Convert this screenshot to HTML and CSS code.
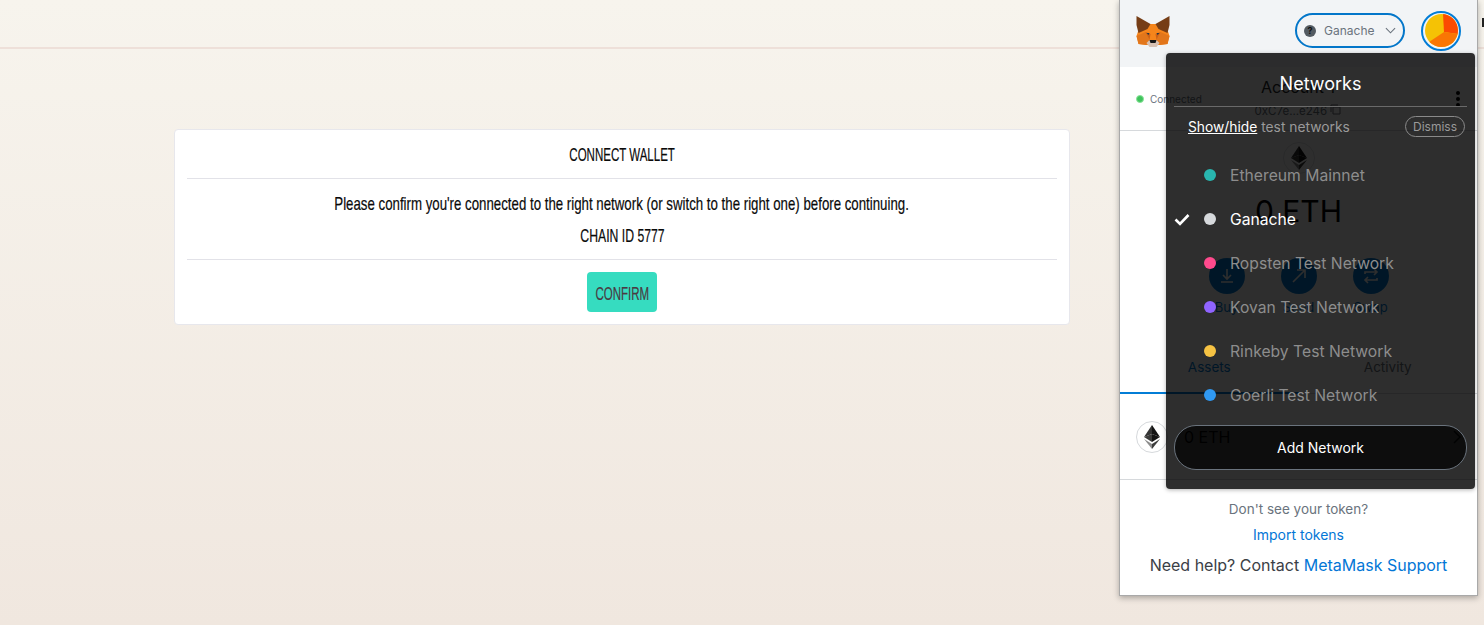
FILE: index.html
```html
<!DOCTYPE html>
<html>
<head>
  <title>Connect wallet</title>
  <link rel="stylesheet" href="styles.css">
</head>
<body>
  <header class="topbar"></header>
  <main class="content">
    <section class="card">
      <h2 class="card-title"><span class="narrow narrow-title">CONNECT WALLET</span></h2>
      <div class="card-body">
        <p><span class="narrow narrow-msg">Please confirm you're connected to the right network (or switch to the right one) before continuing.</span></p>
        <p><span class="narrow narrow-chain">CHAIN ID 5777</span></p>
      </div>
      <div class="card-footer">
        <button class="confirm"><span class="narrow narrow-title">CONFIRM</span></button>
      </div>
    </section>
  </main>

  <span class="stray"></span>

  <div class="popup">
    <div class="mm-header">
      <svg class="fox" viewBox="0 0 33 31">
        <polygon fill="#f6851b" points="2,14 11,8 22,8 31,14 33,20 31,28 23,29 10,29 2,28 0,20"/>
        <polygon fill="#e2761b" points="0,20 9,16 13,24 10,29 2,28"/>
        <polygon fill="#e2761b" points="33,20 24,16 20,24 23,29 31,28"/>
        <polygon fill="#763d16" points="0,0 14,8 11,13 2,17 0,9"/>
        <polygon fill="#763d16" points="33,0 19,8 22,13 31,17 33,9"/>
        <polygon fill="#cd6116" points="9,16 14,18 13,24"/>
        <polygon fill="#cd6116" points="24,16 19,18 20,24"/>
        <polygon fill="#233447" points="10,17 13,17 12,19"/>
        <polygon fill="#233447" points="23,17 20,17 21,19"/>
        <polygon fill="#d7c1b3" points="10,27 13,24 20,24 23,27 20,31 13,31"/>
        <polygon fill="#161616" points="13,24 20,24 19,27 14,27"/>
      </svg>
      <div class="net-pill">
        <span class="net-q">?</span>
        <span class="net-name">Ganache</span>
        <svg class="net-caret" viewBox="0 0 12 7"><path d="M1 1l5 5 5-5" fill="none" stroke="#6a737d" stroke-width="1.2"/></svg>
      </div>
      <div class="avatar-ring">
        <svg class="avatar" viewBox="0 0 33 33">
          <rect width="33" height="33" fill="#f5c205"/>
          <polygon fill="#fb4b02" points="18,0 33,0 33,20 19,18"/>
          <polygon fill="#f97604" points="19,18 33,20 33,33 5,33 4,28"/>
        </svg>
      </div>
    </div>

    <div class="acct-row">
      <div class="connected"><span class="conn-dot"></span>Connected</div>
      <div class="acct-info">
        <div class="acct-name">Account 1</div>
        <div class="acct-addr">0xC7e...e246
          <svg class="copy" viewBox="0 0 11 11"><path d="M3 3h7v7H3zM1 8V1h7" fill="none" stroke="#6a737d"/></svg>
        </div>
      </div>
      <div class="kebab"><i></i><i></i><i></i></div>
    </div>

    <div class="overview">
      <span class="eth-ring">
        <svg class="eth" viewBox="0 0 16 24">
          <polygon fill="#343434" points="8,0 0,12 8,9"/>
          <polygon fill="#141414" points="8,0 16,12 8,9"/>
          <polygon fill="#3c3c3b" points="0,12 8,17 8,9"/>
          <polygon fill="#141414" points="16,12 8,17 8,9"/>
          <polygon fill="#8c8c8c" points="0,14 8,24 8,19"/>
          <polygon fill="#3c3c3b" points="16,14 8,24 8,19"/>
        </svg>
      </span>
      <div class="balance">0 ETH</div>
      <div class="actions">
        <div class="action">
          <span class="action-btn"><svg viewBox="0 0 18 18"><path d="M9 2v9M5 8l4 4 4-4M3 15h12" fill="none" stroke="#fff" stroke-width="1.6"/></svg></span>
          Buy
        </div>
        <div class="action">
          <span class="action-btn"><svg viewBox="0 0 18 18"><path d="M3 15L15 3M7 3h8v8" fill="none" stroke="#fff" stroke-width="1.6"/></svg></span>
          Send
        </div>
        <div class="action">
          <span class="action-btn"><svg viewBox="0 0 18 18"><path d="M3 7V5h12M12 2l3 3-3 3M15 11v2H3M6 10l-3 3 3 3" fill="none" stroke="#fff" stroke-width="1.6"/></svg></span>
          Swap
        </div>
      </div>
    </div>

    <div class="tabs">
      <div class="tab tab-active">Assets</div>
      <div class="tab">Activity</div>
    </div>

    <div class="asset-row">
      <span class="asset-ring">
        <svg class="asset-eth" viewBox="0 0 16 24">
          <polygon fill="#343434" points="8,0 0,12 8,9"/>
          <polygon fill="#141414" points="8,0 16,12 8,9"/>
          <polygon fill="#3c3c3b" points="0,12 8,17 8,9"/>
          <polygon fill="#141414" points="16,12 8,17 8,9"/>
          <polygon fill="#8c8c8c" points="0,14 8,24 8,19"/>
          <polygon fill="#3c3c3b" points="16,14 8,24 8,19"/>
        </svg>
      </span>
      <span class="asset-name">0 ETH</span>
      <svg class="asset-caret" viewBox="0 0 8 14"><path d="M1 1l6 6-6 6" fill="none" stroke="#24272a" stroke-width="1.5"/></svg>
    </div>

    <div class="mm-footer">
      <div class="no-token">Don't see your token?</div>
      <a class="mm-link import">Import tokens</a>
      <div class="help">Need help? Contact <a class="mm-link">MetaMask Support</a></div>
    </div>

    <div class="net-menu">
      <div class="menu-title">Networks</div>
      <div class="menu-note">
        <span><a class="show-hide">Show/hide</a> test networks</span>
        <span class="dismiss">Dismiss</span>
      </div>
      <ul class="net-list">
        <li class="net-item"><span class="check"></span><span class="dot dot-main"></span>Ethereum Mainnet</li>
        <li class="net-item net-current">
          <span class="check"><svg viewBox="0 0 16 13"><path d="M1.5 6.5l4.5 4.5 8.5-9" fill="none" stroke="#fff" stroke-width="2.6"/></svg></span>
          <span class="dot dot-ganache"></span>Ganache
        </li>
        <li class="net-item"><span class="check"></span><span class="dot dot-ropsten"></span>Ropsten Test Network</li>
        <li class="net-item"><span class="check"></span><span class="dot dot-kovan"></span>Kovan Test Network</li>
        <li class="net-item"><span class="check"></span><span class="dot dot-rinkeby"></span>Rinkeby Test Network</li>
        <li class="net-item"><span class="check"></span><span class="dot dot-goerli"></span>Goerli Test Network</li>
      </ul>
      <button class="add-network">Add Network</button>
    </div>
  </div>
</body>
</html>
```

FILE: styles.css
```css
* {
  box-sizing: border-box;
}

body {
  margin: 0;
  height: 625px;
  overflow: hidden;
  font-family: "Liberation Sans", sans-serif;
  background: linear-gradient(#f7f4ed, #f0e7df);
}

.topbar {
  height: 49px;
  border-bottom: 2px solid #eee0d9;
}

.content {
  padding: 80px 0 0 174px;
}

.card {
  width: 896px;
  height: 196px;
  padding: 0 12px;
  background: #fff;
  border: 1px solid #e7e7ec;
  border-radius: 4px;
  text-align: center;
  color: #0a0a0a;
}

/* no condensed face is installed, so the plain one is squeezed */
.narrow {
  display: inline-block;
  font-size: 19px;
  white-space: nowrap;
  -webkit-text-stroke: 0.2px currentColor;
}

.narrow-title {
  transform: scaleX(0.606);
}

.narrow-msg {
  transform: scaleX(0.698);
}

.narrow-chain {
  transform: scaleX(0.644);
}

.card-title {
  margin: 0;
  height: 49px;
  line-height: 50px;
  font-size: 16px;
  font-weight: normal;
  border-bottom: 1px solid #e2e2e8;
}

.card-body {
  height: 81px;
  padding-top: 13px;
  border-bottom: 1px solid #e2e2e8;
  font-size: 16px;
}

.card-body p {
  margin: 0 0 7px;
  line-height: 24px;
}

.card-footer {
  padding-top: 12px;
}

.confirm {
  width: 70px;
  height: 40px;
  padding: 3px 0 0;
  border: none;
  border-radius: 4px;
  background: #36dcc0;
  color: #4a3a42;
  font-family: inherit;
  white-space: nowrap;
  display: flex;
  align-items: center;
  justify-content: center;
  margin: 0 auto;
}

.stray {
  position: absolute;
  left: 1482px;
  top: 18px;
  width: 2px;
  height: 9px;
  background: #222;
}

/* wallet popup */
.popup {
  position: absolute;
  top: 0;
  left: 1119px;
  width: 359px;
  height: 596px;
  background: #fff;
  border: 1px solid #a9a9a9;
  border-top: none;
  box-shadow: 0 2px 6px rgba(0, 0, 0, 0.3);
  font-family: Inter, sans-serif;
  color: #24272a;
}

.mm-header {
  height: 67px;
  background: #f2f4f6;
  display: flex;
  align-items: center;
  padding: 0 16px;
}

.fox {
  width: 34px;
  height: 31px;
  margin-bottom: 4px;
}

.net-pill {
  width: 110px;
  height: 35px;
  margin: -6px 0 0 125px;
  padding: 0 7px 0 7px;
  border: 2px solid #0376c9;
  border-radius: 18px;
  display: flex;
  align-items: center;
  font-size: 12px;
  color: #6a737d;
}

.net-q {
  width: 12px;
  height: 12px;
  border-radius: 50%;
  background: #535a61;
  color: #111;
  font-size: 9px;
  font-weight: bold;
  line-height: 12px;
  text-align: center;
}

.net-name {
  margin-left: 8px;
  flex-grow: 1;
}

.net-caret {
  width: 11px;
  height: 7px;
}

.avatar-ring {
  width: 40px;
  height: 40px;
  margin: -6px 0 0 16px;
  border: 2px solid #037dd6;
  border-radius: 50%;
  display: flex;
  align-items: center;
  justify-content: center;
}

.avatar {
  width: 33px;
  height: 33px;
  border-radius: 50%;
}

.acct-row {
  height: 64px;
  border-bottom: 1px solid #d6d9dc;
  display: flex;
  align-items: center;
  padding: 0 16px;
}

.connected {
  width: 104px;
  font-size: 10px;
  color: #6a737d;
  display: flex;
  align-items: center;
}

.conn-dot {
  width: 8px;
  height: 8px;
  margin-right: 6px;
  border-radius: 50%;
  background: #3fc35c;
  border: 1.5px solid #8be39b;
}

.acct-info {
  width: 116px;
  text-align: center;
}

.acct-name {
  font-size: 16px;
  line-height: 20px;
  margin-top: -2px;
}

.acct-addr {
  margin-top: 7px;
  font-size: 11.5px;
  color: #6a737d;
  white-space: nowrap;
}

.copy {
  width: 11px;
  height: 11px;
}

.kebab {
  margin-left: auto;
  margin-right: 1px;
  display: flex;
  flex-direction: column;
  gap: 2px;
}

.kebab i {
  width: 4px;
  height: 4px;
  border-radius: 50%;
  background: #000;
}

.overview {
  height: 223px;
  display: flex;
  flex-direction: column;
  align-items: center;
  padding-top: 11px;
}

.eth-ring {
  width: 32px;
  height: 32px;
  border: 1px solid #e0e2e4;
  border-radius: 50%;
  display: flex;
  align-items: center;
  justify-content: center;
}

.eth {
  width: 16px;
  height: 24px;
}

.balance {
  margin-top: 13px;
  font-size: 30px;
  line-height: 48px;
  color: #000;
}

.actions {
  margin-top: 23px;
  display: flex;
  gap: 36px;
}

.action {
  width: 36px;
  display: flex;
  flex-direction: column;
  align-items: center;
  font-size: 13px;
  color: #037dd6;
}

.action-btn {
  width: 36px;
  height: 36px;
  margin-bottom: 5px;
  border-radius: 50%;
  background: #037dd6;
  display: flex;
  align-items: center;
  justify-content: center;
}

.action-btn svg {
  width: 18px;
  height: 18px;
}

.tabs {
  height: 40px;
  display: flex;
  border-bottom: 1px solid #d6d9dc;
}

.tab {
  flex: 1;
  text-align: center;
  font-size: 13.5px;
  line-height: 27px;
  color: #6a737d;
}

.tab-active {
  color: #037dd6;
  border-bottom: 2px solid #037dd6;
  height: 40px;
}

.asset-row {
  height: 86px;
  border-bottom: 1px solid #d6d9dc;
  display: flex;
  align-items: center;
  padding: 0 16px;
}

.asset-ring {
  width: 32px;
  height: 32px;
  border: 1px solid #d6d9dc;
  border-radius: 50%;
  display: flex;
  align-items: center;
  justify-content: center;
}

.asset-eth {
  width: 16px;
  height: 24px;
}

.asset-name {
  margin-left: 16px;
  font-size: 16px;
  color: #000;
}

.asset-caret {
  margin-left: auto;
  width: 8px;
  height: 14px;
}

.mm-footer {
  padding-top: 19px;
  text-align: center;
}

.no-token {
  font-size: 13.5px;
  line-height: 20px;
  color: #6a737d;
}

.mm-link {
  color: #0376d6;
}

.import {
  display: block;
  margin-top: 6px;
  font-size: 14px;
  line-height: 20px;
}

.help {
  margin-top: 9px;
  font-size: 16px;
  line-height: 22px;
  color: #3b4046;
}

/* dark network dropdown over the popup */
.net-menu {
  position: absolute;
  top: 53px;
  left: 46px;
  width: 309px;
  height: 436px;
  padding: 0 8px;
  background: rgba(0, 0, 0, 0.82);
  border-radius: 4px;
  box-shadow: 0 1px 4px rgba(0, 0, 0, 0.3);
  color: #fff;
}

.menu-title {
  height: 54px;
  line-height: 62px;
  text-align: center;
  font-size: 18px;
  border-bottom: 1px solid #6a6a6a;
}

.menu-note {
  height: 46px;
  padding: 8px 2px 0 14px;
  display: flex;
  align-items: flex-start;
  justify-content: space-between;
  font-size: 13.8px;
  line-height: 24px;
  color: #9a9a9a;
}

.show-hide {
  color: #fff;
  text-decoration: underline;
}

.dismiss {
  width: 60px;
  height: 21px;
  margin-top: 1px;
  border: 1px solid #8a8a8a;
  border-radius: 11px;
  text-align: center;
  font-size: 12px;
  line-height: 19px;
}

.net-list {
  list-style: none;
  margin: 0;
  padding: 0;
}

.net-item {
  height: 44px;
  display: flex;
  align-items: center;
  font-size: 15.7px;
  color: #8d8d8d;
}

.net-current {
  color: #fff;
}

.check {
  width: 16px;
  display: flex;
}

.check svg {
  width: 16px;
  height: 13px;
}

.dot {
  width: 12px;
  height: 12px;
  margin: 0 14px;
  border-radius: 50%;
}

.dot-main { background: #29b6af; }
.dot-ganache { background: #d6d9dc; }
.dot-ropsten { background: #ff4a8d; }
.dot-kovan { background: #9064ff; }
.dot-rinkeby { background: #f6c343; }
.dot-goerli { background: #3099f2; }

.add-network {
  display: block;
  width: 293px;
  height: 45px;
  margin-top: 8px;
  background: rgba(0, 0, 0, 0.7);
  border: 1px solid #6a737d;
  border-radius: 22px;
  color: #fff;
  font-family: inherit;
  font-size: 14px;
}
```
